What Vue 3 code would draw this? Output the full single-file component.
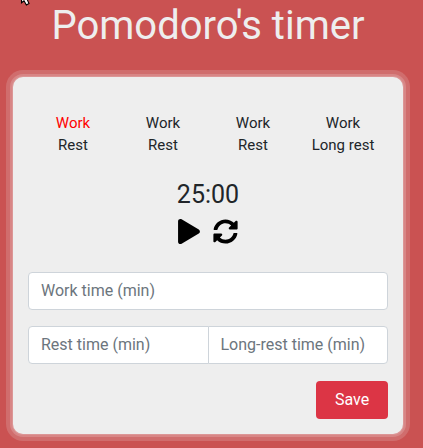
<script setup>
import { ref } from 'vue'

const rounds = [
  { work: 'Work', rest: 'Rest' },
  { work: 'Work', rest: 'Rest' },
  { work: 'Work', rest: 'Rest' },
  { work: 'Work', rest: 'Long rest' },
]
const current = ref(0)
const workTime = ref('')
const restTime = ref('')
const longRestTime = ref('')
</script>

<template>
  <main class="page">
    <svg class="pointer" viewBox="0 0 12 6" aria-hidden="true">
      <path d="M1.5 -6V2.8L4 .8L6.4 5L9 3.6L7 -1H9Z" fill="#fff" stroke="#000" stroke-width="1.1" />
    </svg>
    <h1 class="title">Pomodoro's timer</h1>
    <section class="card">
      <div class="rounds">
        <div v-for="(round, i) in rounds" :key="i" class="round">
          <div :class="{ active: i === current }">{{ round.work }}</div>
          <div>{{ round.rest }}</div>
        </div>
      </div>
      <div class="clock">25:00</div>
      <div class="controls">
        <button class="icon-button" aria-label="Start">
          <svg class="play" viewBox="0 0 448 512"><path d="M424.4 214.7L72.4 6.6C43.8-10.3 0 6.1 0 47.9V464c0 37.5 40.7 60.1 72.4 41.3l352-208c31.4-18.5 31.5-64.1 0-82.6z" /></svg>
        </button>
        <button class="icon-button" aria-label="Reset">
          <svg class="sync" viewBox="0 0 512 512"><path d="M370.72 133.28C339.458 104.008 298.888 87.962 255.848 88c-77.458.068-144.328 53.178-162.791 126.85-1.344 5.363-6.122 9.15-11.651 9.15H24.103c-7.498 0-13.194-6.807-11.807-14.176C33.933 94.924 134.813 8 256 8c66.448 0 126.791 26.136 171.315 68.685L463.03 40.97C478.149 25.851 504 36.559 504 57.941V192c0 13.255-10.745 24-24 24H345.941c-21.382 0-32.09-25.851-16.971-40.971l41.75-41.749zM32 296h134.059c21.382 0 32.09 25.851 16.971 40.971l-41.75 41.75c31.262 29.273 71.835 45.319 114.876 45.28 77.418-.07 144.315-53.144 162.787-126.849 1.344-5.363 6.122-9.15 11.651-9.15h57.304c7.498 0 13.194 6.807 11.807 14.176C478.067 417.076 377.187 504 256 504c-66.448 0-126.791-26.136-171.315-68.685L48.97 471.03C33.851 486.149 8 475.441 8 454.059V320c0-13.255 10.745-24 24-24z" /></svg>
        </button>
      </div>
      <form class="settings" @submit.prevent>
        <input v-model="workTime" class="field" placeholder="Work time (min)" />
        <div class="group">
          <input v-model="restTime" class="field" placeholder="Rest time (min)" />
          <input v-model="longRestTime" class="field" placeholder="Long-rest time (min)" />
        </div>
        <button class="save" type="submit">Save</button>
      </form>
    </section>
  </main>
</template>

<style>
body {
  background: #ca5252;
  overflow: hidden;
}
</style>

<style scoped>
.page,
.page * {
  box-sizing: border-box;
}
.page {
  position: relative;
  height: 448px;
  overflow: hidden;
  background: #ca5252;
  color: #212529;
  font: 400 16px/24px Roboto, sans-serif;
}
.pointer {
  position: absolute;
  left: 20px;
  top: 0;
  width: 12px;
  height: 6px;
}
.title {
  margin: 0;
  color: #eee;
  font-size: 40px;
  font-weight: 400;
  line-height: 52px;
  text-align: center;
  padding-right: 7px;
}
.card {
  width: 390px;
  height: 357px;
  margin: 25px 0 0 13px;
  padding: 35px 15px 16px;
  border-radius: 10px;
  background: #eee;
  box-shadow: 0 0 0 1px #dc9696, 0 0 0 3px #d88686, 0 0 0 7px #d06d6d;
}
.rounds {
  display: grid;
  grid-template-columns: repeat(4, 1fr);
  text-align: center;
  font-size: 15px;
  line-height: 22px;
}
.active {
  color: #f00;
}
.clock {
  margin-top: 20px;
  text-align: center;
  font-size: 25px;
  line-height: 37px;
}
.controls {
  display: flex;
  justify-content: center;
  gap: 13px;
  margin-top: 6px;
}
.icon-button {
  display: flex;
  padding: 0;
  border: 0;
  background: none;
}
.play {
  width: 22px;
  height: 25px;
}
.sync {
  width: 25px;
  height: 25px;
}
.settings {
  display: flex;
  flex-direction: column;
  gap: 16px;
  margin-top: 28px;
}
.field {
  display: block;
  width: 100%;
  min-width: 0;
  height: 38px;
  padding: 5px 12px 7px;
  border: 1px solid #ced4da;
  border-radius: 4px;
  background: #fff;
  font: inherit;
}
.field::placeholder {
  color: #6c757d;
  opacity: 1;
}
.group {
  display: flex;
}
.group .field {
  flex: 1 1 0;
}
.group .field:first-child {
  border-radius: 4px 0 0 4px;
}
.group .field:last-child {
  margin-left: -1px;
  border-radius: 0 4px 4px 0;
}
.save {
  align-self: flex-end;
  width: 72px;
  height: 38px;
  padding: 0;
  border: 0;
  border-radius: 4px;
  margin-top: 1px;
  background: #dc3545;
  color: #fff;
  font: inherit;
}
</style>
